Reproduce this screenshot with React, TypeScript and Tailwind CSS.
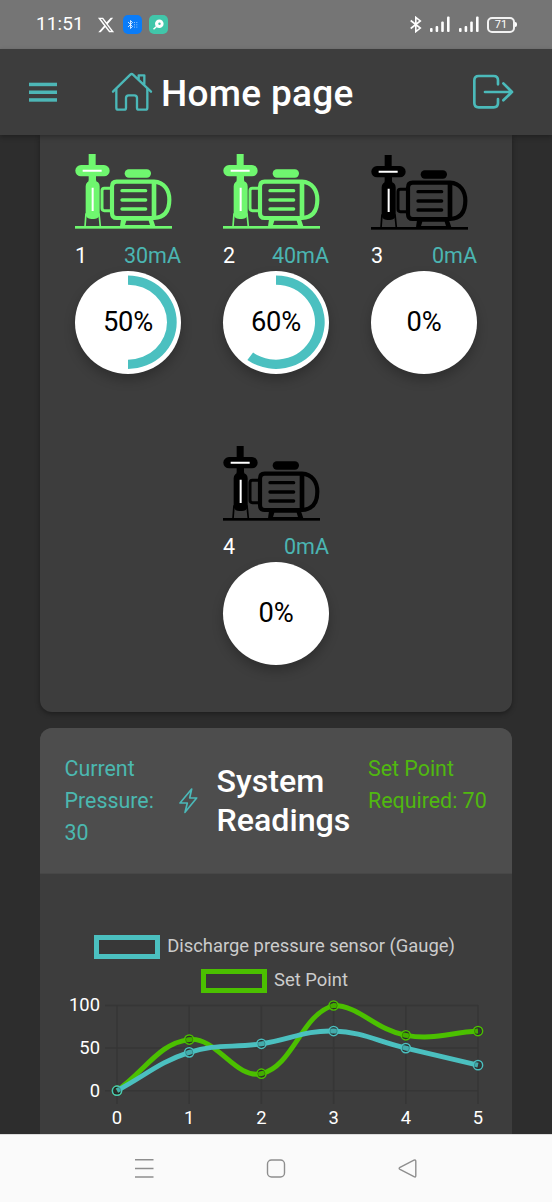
import React from "react";
import { FaXTwitter } from "react-icons/fa6";

const TEAL = "#4bc0c0";
const GREEN = "#4bc000";

function SignalBars() {
  return (
    <svg className="h-[17px] w-[22px] shrink-0" viewBox="0 0 22 17" fill="#fff">
      <rect x="1" y="12" width="2.6" height="4" rx="1" />
      <rect x="6.6" y="10" width="2.6" height="6" rx="1" />
      <rect x="12.2" y="5.500" width="2.600" height="10.500" rx="1" />
      <rect x="18" y="0.500" width="2.600" height="15.500" rx="1" />
    </svg>
  );
}

function StatusBar() {
  return (
    <div className="flex h-[49px] shrink-0 items-center bg-[#757575] pl-[36px] pr-[35px] text-white">
      <span className="w-[61px] whitespace-nowrap text-[19px] tracking-[0.1px]">11:51</span>
      <FaXTwitter className="h-[18px] w-[18px]" />
      <span className="ml-[8px] flex h-[19px] w-[19px] items-center justify-center rounded-[5px] bg-[#0a7cf8]">
        <svg className="h-[11px] w-[11px]" viewBox="0 0 11 11" fill="none" stroke="#fff" strokeWidth="0.8">
          <path d="M1 3l4.500 4.500-2 2V1.500l2 2L1 8" />
          <path d="M7.500 3v6M9.800 3v6" strokeDasharray="1 1.300" opacity="0.7" />
        </svg>
      </span>
      <span className="ml-[7px] flex h-[19px] w-[19px] items-center justify-center rounded-[5px] bg-[#41c6aa]">
        <svg className="h-[13px] w-[15px]" viewBox="0 0 15 13">
          <circle cx="8.300" cy="5.800" r="4.300" fill="#fff" />
          <path d="M5.500 8.500L2.500 11.200" stroke="#fff" strokeWidth="1.500" />
          <circle cx="8.500" cy="5.800" r="1.200" fill="#41c6aa" />
        </svg>
      </span>
      <div className="ml-auto flex items-center">
        <svg className="mr-[7px] h-[17px] w-[12px] shrink-0" viewBox="0 0 12 17" fill="none" stroke="#fff" strokeWidth="1.600">
          <path d="M.7 4.500l9.600 7.500-4.500 3.600V1.400l4.500 3.600L.7 12.500" />
        </svg>
        <SignalBars />
        <span className="w-[7px]" />
        <SignalBars />
        <span className="ml-[7px] flex h-[16px] w-[28px] items-center justify-center rounded-[5px] border-2 border-[#f2f2f2] text-[11px] leading-none">
          71
        </span>
        <span className="h-[5px] w-[2px] rounded-r bg-white" />
      </div>
    </div>
  );
}

function Header() {
  return (
    <header className="relative z-10 flex h-[86px] shrink-0 items-center bg-[#3d3d3d] pl-[29px] pr-[38px] shadow-[0_2px_5px_rgba(0,0,0,0.3)]">
      <svg className="h-[20px] w-[28px]" viewBox="0 0 28 20" fill="#4db6b6">
        <rect y="0.700" width="28" height="3.500" />
        <rect y="8.500" width="28" height="3.500" />
        <rect y="16.200" width="28" height="3.500" />
      </svg>
      <svg
        className="ml-[53px] h-[42px] w-[44px]"
        viewBox="330 215 132 126"
        fill="none"
        stroke="#4bb8b8"
        strokeWidth="7"
        strokeLinecap="round"
        strokeLinejoin="round"
      >
        <path d="M339 277L391 226Q395 222 399 226L453 277M416 239V228H433V255" />
        <path d="M349 270V325q0 6 6 6H372q6 0 6-6V296q0-8 8-8H403q8 0 8 8V325q0 6 6 6H436q6 0 6-6V268" />
      </svg>
      <h1 className="ml-[7px] whitespace-nowrap pt-[2px] text-[37px] font-medium leading-none tracking-[0.3px] text-white">
        Home page
      </h1>
      <svg
        className="ml-auto h-[38px] w-[42px]"
        viewBox="590 221 126 114"
        fill="none"
        stroke="#4bbaba"
        strokeWidth="8"
        strokeLinecap="round"
        strokeLinejoin="round"
      >
        <path d="M668 255V243q0-13-13-13H610q-13 0-13 13V311q0 13 13 13H655q13 0 13-13V299" />
        <path d="M629 278H710M684 252L710 278L684 303" />
      </svg>
    </header>
  );
}

function PumpIcon({ color }: { color: string }) {
  return (
    <svg className="h-[75px] w-[97px] shrink-0" viewBox="135 72 291 225" fill="none" stroke={color} strokeWidth="10">
      <g fill={color} stroke="none">
        <rect x="176" y="72" width="21" height="36" />
        <rect x="136" y="105" width="103" height="34" rx="17" />
        <path d="M176 136H198V150q0 5 6 7q5 4 5 12V250q0 17-17 17H184q-17 0-17-17V169q0-8 5-12q4-2 4-7z" />
        <rect x="284" y="118" width="79" height="25" rx="12.500" />
        <rect x="135" y="288" width="291" height="8" />
        <path d="M273 268H369L376 289H270z" />
      </g>
      <path d="M289 272H356L360 285H285z" fill="#3d3d3d" stroke="none" />
      <path d="M168 250L165 290M207 250L211 290" strokeWidth="5" />
      <path d="M244 175H223q-7 0-7 7V235q0 7 7 7H244" strokeWidth="9" />
      <path
        d="M260 155H372C404 157 418 181 418 209C418 241 404 262 372 264H260q-14 0-14-15V170q0-15 14-15z"
        strokeWidth="12.500"
      />
      <path d="M372 154V265" strokeWidth="14" />
      <path d="M276 182H347M276 210H347M276 237H347" strokeLinecap="round" strokeWidth="10" />
      <path d="M158 122H215M188 173V243" stroke="#fff" strokeWidth="6" />
    </svg>
  );
}

function Gauge({ percent }: { percent: number }) {
  const a = (percent / 100) * Math.PI * 2;
  const large = percent > 50 ? 1 : 0;
  const sx = Math.sin(a);
  const cy = Math.cos(a);
  return (
    <div className="grid h-[103px] w-[106px] place-items-center rounded-[50%] bg-white shadow-[0_6px_12px_rgba(0,0,0,0.24)]">
      <svg className="col-start-1 row-start-1 h-[103px] w-[106px]" viewBox="0 0 106 103">
        {percent > 0 ? (
          <path
            fill={TEAL}
            d={`M53 4.500A48.700 46.700 0 ${large} 1 ${53 + 48.7 * sx} ${51.2 - 46.7 * cy}L${53 + 39 * sx} ${
              51.2 - 37.5 * cy
            }A39 37.500 0 ${large} 0 53 13.700z`}
          />
        ) : null}
      </svg>
      <span className="col-start-1 row-start-1 text-[27.300px] leading-none tracking-[-0.2px] text-black">{percent}%</span>
    </div>
  );
}

function Pump({ id, current, percent }: { id: number; current: number; percent: number }) {
  const running = percent > 0;
  return (
    <div className="flex w-[106px] flex-col">
      <div className={running ? "h-[76px]" : "h-[76px] pt-px"}>
        <PumpIcon color={running ? "#6ff76f" : "#000"} />
      </div>
      <div className="flex h-[41px] items-center justify-between pt-[10px] text-[21.500px] leading-none">
        <span className="text-white">{id}</span>
        <span className="text-[#4bb5b2]">{current}mA</span>
      </div>
      <Gauge percent={percent} />
    </div>
  );
}

function PumpsCard() {
  return (
    <section className="flex h-[577px] shrink-0 flex-col items-center rounded-b-[12px] bg-[#3d3d3d] pt-[19px] shadow-[0_2px_5px_rgba(0,0,0,0.35)]">
      <div className="flex gap-[42px]">
        <Pump id={1} current={30} percent={50} />
        <Pump id={2} current={40} percent={60} />
        <Pump id={3} current={0} percent={0} />
      </div>
      <div className="mt-[71px]">
        <Pump id={4} current={0} percent={0} />
      </div>
    </section>
  );
}

type Pt = { x: number; y: number };

const X0 = 77;
const STEP = 72.2;
const TOP = 10.5;
const BOTTOM = 95.7;

function toPoints(values: number[]): Pt[] {
  return values.map((v, i) => ({ x: X0 + i * STEP, y: BOTTOM - (v / 100) * (BOTTOM - TOP) }));
}

function smoothPath(pts: Pt[], tension = 0.4): string {
  const clamp = (y: number) => Math.max(TOP, Math.min(BOTTOM, y));
  const ctrl = pts.map((p, i) => {
    const prev = pts[i - 1] ?? p;
    const next = pts[i + 1] ?? p;
    const d1 = Math.hypot(p.x - prev.x, p.y - prev.y);
    const d2 = Math.hypot(next.x - p.x, next.y - p.y);
    const fa = (tension * d1) / (d1 + d2);
    const fb = (tension * d2) / (d1 + d2);
    const dx = next.x - prev.x;
    const dy = next.y - prev.y;
    return { bx: p.x - fa * dx, by: clamp(p.y - fa * dy), ax: p.x + fb * dx, ay: clamp(p.y + fb * dy) };
  });
  return pts
    .map((p, i) =>
      i === 0
        ? `M${p.x} ${p.y}`
        : `C${ctrl[i - 1].ax} ${ctrl[i - 1].ay} ${ctrl[i].bx} ${ctrl[i].by} ${p.x} ${p.y}`
    )
    .join("");
}

function Series({ values, color }: { values: number[]; color: string }) {
  const pts = toPoints(values);
  return (
    <g>
      <path d={smoothPath(pts)} fill="none" stroke={color} strokeWidth="4.900" />
      {pts.map((p) => (
        <circle key={p.x} cx={p.x} cy={p.y} r="4.600" fill="rgba(0,0,0,0.1)" stroke={color} strokeWidth="1.500" />
      ))}
      {pts.map((p) => (
        <circle key={p.x} cx={p.x} cy={p.y} r="3.600" fill="none" stroke="rgba(0,0,0,0.22)" strokeWidth="0.900" />
      ))}
    </g>
  );
}

function Chart() {
  const ticks = [0, 1, 2, 3, 4, 5];
  return (
    <svg className="h-[139px] w-[472px] shrink-0" viewBox="0 0 472 139" fill="#fff" fontSize="18.400">
      <g stroke="#363636" strokeWidth="1.500">
        {[10.5, 53, 95.7].map((y) => (
          <path key={y} d={`M65 ${y}H438`} />
        ))}
        {ticks.map((t) => (
          <path key={t} d={`M${X0 + t * STEP} 10V109`} />
        ))}
      </g>
      <text x="60" y="16" textAnchor="end">100</text>
      <text x="60" y="59" textAnchor="end">50</text>
      <text x="60" y="101.500" textAnchor="end">0</text>
      {ticks.map((t) => (
        <text key={t} x={X0 + t * STEP} y="129.300" textAnchor="middle">
          {t}
        </text>
      ))}
      <Series values={[0, 60, 20, 100, 65, 70]} color={GREEN} />
      <Series values={[0, 45, 55, 70, 50, 30]} color={TEAL} />
    </svg>
  );
}

function ReadingsCard() {
  return (
    <section className="mt-[16px] flex flex-1 flex-col overflow-hidden rounded-t-[12px] bg-[#3d3d3d]">
      <div className="flex h-[146px] shrink-0 border-b border-[#474747] bg-[#4d4d4d] pl-[24.500px] pt-[25px] text-[21.400px] leading-[32.200px]">
        <div className="w-[113px] shrink-0 text-[#4bb8b0]">
          Current
          <br />
          Pressure:
          <br />
          30
        </div>
        <svg
          className="mt-[34px] h-[28px] w-[20px] shrink-0"
          viewBox="444 263 60 84"
          fill="none"
          stroke="#4bb8b8"
          strokeWidth="5"
          strokeLinejoin="round"
        >
          <path d="M485 269L450 311H472L465 339L500 296H479z" />
        </svg>
        <h2 className="ml-[19px] w-[151px] shrink-0 pt-[9px] text-[32.200px] font-medium leading-[39px] text-white">
          System
          <br />
          Readings
        </h2>
        <div className="whitespace-nowrap pl-[0.5px] text-[#50b80f]">
          Set Point
          <br />
          Required: 70
        </div>
      </div>
      <div className="flex shrink-0 flex-col items-center gap-[10px] pb-[2px] pr-[3px] pt-[61px] text-[18.400px] leading-[22px] text-[#cccccc]">
        <div className="flex items-center gap-[7px] whitespace-nowrap">
          <span className="h-[24px] w-[66px] border-5 border-[#4bc0c0] bg-[#383838]" />
          <span className="pb-[2px]">Discharge pressure sensor (Gauge)</span>
        </div>
        <div className="flex items-center gap-[7px] whitespace-nowrap">
          <span className="h-[24px] w-[66px] border-5 border-[#4bc000] bg-[#383838]" />
          <span className="pb-[2px]">Set Point</span>
        </div>
      </div>
      <Chart />
    </section>
  );
}

function NavBar() {
  return (
    <nav className="flex h-[68px] shrink-0 items-center border-t border-[#dcdcdc] bg-[#fafafa] pl-[134px] pr-[134px]">
      <svg className="h-[20px] w-full" viewBox="0 0 284 20" fill="none" stroke="#8e8e8e" strokeWidth="1.400">
        <path d="M1 .8H19.500M1 9.500H19.500M1 18H19.500" />
        <rect x="133.500" y="1" width="17" height="17" rx="4" />
        <path d="M280 1.200Q281.800 .4 281.800 2.400V16.600Q281.800 18.600 280 17.700L266 10.400Q264.300 9.400 266 8.400z" />
      </svg>
    </nav>
  );
}

export default function App() {
  return (
    <div className="flex h-[1202px] w-[552px] flex-col overflow-hidden bg-[#2d2d2d] font-[Roboto,sans-serif]">
      <StatusBar />
      <Header />
      <main className="flex min-h-0 flex-1 flex-col overflow-hidden px-[40px]">
        <PumpsCard />
        <ReadingsCard />
      </main>
      <NavBar />
    </div>
  );
}
